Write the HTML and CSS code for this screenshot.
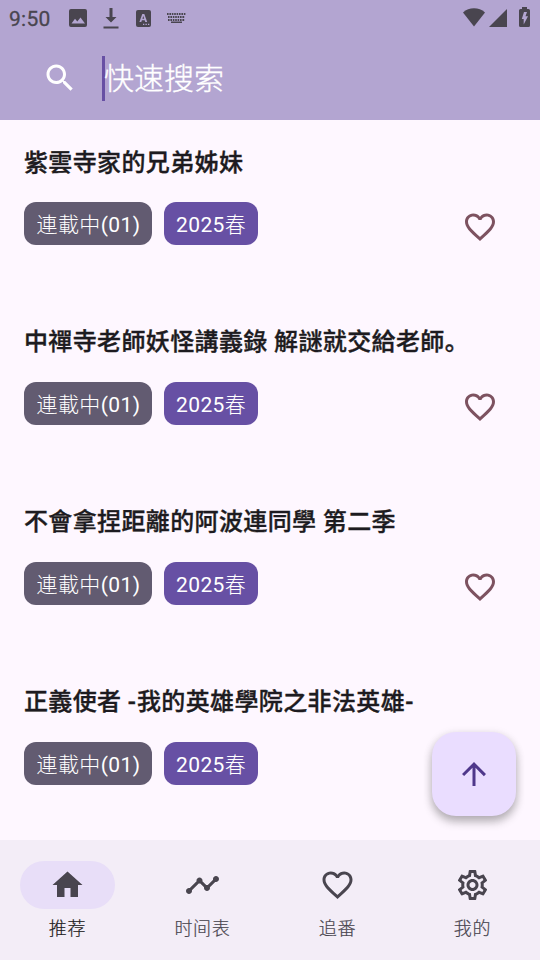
FILE: index.html
```html
<!DOCTYPE html>
<html lang="zh-CN">
<head>
<meta charset="utf-8">
<title>快速搜索</title>
<link rel="stylesheet" href="styles.css">
</head>
<body>
<svg class="defs" width="0" height="0">
  <symbol id="heart" viewBox="0 0 24 24"><path d="M16.5 3c-1.74 0-3.41.81-4.5 2.09C10.91 3.81 9.24 3 7.5 3 4.42 3 2 5.42 2 8.5c0 3.78 3.4 6.86 8.55 11.54L12 21.35l1.45-1.32C18.6 15.36 22 12.28 22 8.5 22 5.42 19.58 3 16.5 3zm-4.4 15.55-.1.1-.1-.1C7.14 14.24 4 11.39 4 8.5 4 6.5 5.5 5 7.5 5c1.54 0 3.04.99 3.57 2.36h1.87C13.46 5.99 14.96 5 16.5 5c2 0 3.5 1.5 3.5 3.5 0 2.89-3.14 5.74-7.9 10.05z"/></symbol>
</svg>
<div class="screen">
  <header class="top">
    <div class="status">
      <span class="time">9:50</span>
      <svg class="s-image" viewBox="0 0 18 18"><path fill-rule="evenodd" d="M2 0h14a2 2 0 0 1 2 2v14a2 2 0 0 1-2 2H2a2 2 0 0 1-2-2V2a2 2 0 0 1 2-2zM2.500 14.500h13.500L11.500 8.500 8.300 12.500 6 9.700z"/></svg>
      <svg class="s-down" viewBox="0 0 16 21"><path d="M6.500 0h3v9h4L8 14.500 2.500 9h4zM.5 18.500h15v2H.5z"/></svg>
      <svg class="s-letter" viewBox="0 0 15 17"><rect width="15" height="17" rx="2"/><path class="cut" d="M3.400 12 6.300 4h2l2.900 8H9.300l-.6-1.800H5.900L5.300 12zM6.400 8.700h1.800l-.9-2.700zM7 13.700h1.300V15H7zm2.500 0h1.300V15H9.500zm2.500 0h1.300V15H12z"/></svg>
      <svg class="s-keys" viewBox="0 0 19 11"><path class="dash" d="M0 1h19M1 4h17M1 7h17"/><path d="M4 8.500h11v1.500H4z"/></svg>
      <span class="space"></span>
      <svg class="s-wifi" viewBox="0 0 22 19"><path d="M11 18.500 0 4.600C3 1.600 7 .3 11 .3s8 1.300 11 4.300z"/></svg>
      <svg class="s-cell" viewBox="0 0 18 18"><path d="M18 0v18H0z"/></svg>
      <svg class="s-battery" viewBox="0 0 11 20"><path d="M3 0h5v2h1.500A1.500 1.500 0 0 1 11 3.500v15A1.500 1.500 0 0 1 9.500 20h-8A1.500 1.500 0 0 1 0 18.500v-15A1.500 1.500 0 0 1 1.500 2H3z"/><path class="cut" d="M5 5h3L6.500 9.300H9L4.700 17.500V12H2.800z"/></svg>
    </div>
    <div class="search">
      <svg class="icon" viewBox="0 0 24 24"><path d="M15.500 14h-.79l-.28-.27C15.410 12.590 16 11.110 16 9.500 16 5.910 13.090 3 9.500 3S3 5.910 3 9.500 5.910 16 9.500 16c1.610 0 3.090-.59 4.230-1.570l.27.28v.79l5 4.990L20.490 19l-4.990-5zm-6 0C7.010 14 5 11.990 5 9.500S7.010 5 9.500 5 14 7.010 14 9.500 11.990 14 9.500 14z"/></svg>
      <span class="field">快速搜索</span>
    </div>
  </header>
  <main class="list">
    <article class="item">
      <h2>紫雲寺家的兄弟姊妹</h2>
      <div class="row"><span class="chip">連載中<span class="latin">(01)</span></span><span class="chip season"><span class="latin">2025</span>春</span><svg class="icon fav"><use href="#heart"/></svg></div>
    </article>
    <article class="item">
      <h2>中禪寺老師妖怪講義錄 解謎就交給老師。</h2>
      <div class="row"><span class="chip">連載中<span class="latin">(01)</span></span><span class="chip season"><span class="latin">2025</span>春</span><svg class="icon fav"><use href="#heart"/></svg></div>
    </article>
    <article class="item">
      <h2>不會拿捏距離的阿波連同學 第二季</h2>
      <div class="row"><span class="chip">連載中<span class="latin">(01)</span></span><span class="chip season"><span class="latin">2025</span>春</span><svg class="icon fav"><use href="#heart"/></svg></div>
    </article>
    <article class="item">
      <h2>正義使者 <span class="hyphen">-</span>我的英雄學院之非法英雄<span class="hyphen">-</span></h2>
      <div class="row"><span class="chip">連載中<span class="latin">(01)</span></span><span class="chip season"><span class="latin">2025</span>春</span></div>
    </article>
  </main>
  <button class="fab" aria-label="Top"><svg class="icon" viewBox="0 0 24 24"><path d="m4 12 1.410 1.410L11 7.830V20h2V7.830l5.580 5.590L20 12l-8-8-8 8z"/></svg></button>
  <nav class="nav">
    <a class="tab active"><span class="pill"><svg class="icon" viewBox="0 0 24 24"><path d="M10 20v-6h4v6h5v-8h3L12 3 2 12h3v8z"/></svg></span>推荐</a>
    <a class="tab"><span class="pill"><svg class="icon" viewBox="0 0 24 24"><path d="M23 8c0 1.100-.9 2-2 2-.18 0-.35-.02-.51-.07l-3.560 3.550c.05.16.07.34.07.52 0 1.100-.9 2-2 2s-2-.9-2-2c0-.18.02-.36.07-.52l-2.550-2.550c-.16.05-.34.07-.52.07s-.36-.02-.52-.07l-4.550 4.560c.05.16.07.33.07.51 0 1.100-.9 2-2 2s-2-.9-2-2 .9-2 2-2c.18 0 .35.02.51.07l4.560-4.550C8.020 9.360 8 9.180 8 9c0-1.100.9-2 2-2s2 .9 2 2c0 .18-.02.36-.07.52l2.550 2.550c.16-.05.34-.07.52-.07s.36.02.52.07l3.550-3.560C19.020 8.350 19 8.180 19 8c0-1.100.9-2 2-2s2 .9 2 2z"/></svg></span>时间表</a>
    <a class="tab"><span class="pill"><svg class="icon"><use href="#heart"/></svg></span>追番</a>
    <a class="tab"><span class="pill"><svg class="icon" viewBox="0 0 24 24"><path d="M19.430 12.980c.04-.32.07-.64.07-.98s-.03-.66-.07-.98l2.110-1.650c.19-.15.24-.42.12-.64l-2-3.460c-.09-.16-.26-.25-.44-.25-.06 0-.12.010-.17.030l-2.490 1c-.52-.4-1.080-.73-1.690-.98l-.38-2.650C14.460 2.180 14.250 2 14 2h-4c-.25 0-.46.18-.49.42l-.38 2.650c-.61.25-1.170.59-1.690.98l-2.490-1c-.06-.02-.12-.03-.18-.03-.17 0-.34.09-.43.25l-2 3.460c-.13.22-.07.49.12.64l2.110 1.650c-.04.32-.07.65-.07.98s.03.66.07.98l-2.110 1.650c-.19.15-.24.42-.12.64l2 3.460c.09.16.26.25.44.25.06 0 .12-.01.17-.03l2.490-1c.52.4 1.080.73 1.690.98l.38 2.650c.03.24.24.42.49.42h4c.25 0 .46-.18.49-.42l.38-2.650c.61-.25 1.170-.59 1.690-.98l2.490 1c.06.02.12.03.18.03.17 0 .34-.09.43-.25l2-3.460c.12-.22.07-.49-.12-.64l-2.110-1.650zm-1.980-1.710c.04.31.05.52.05.73s-.02.43-.05.73l-.14 1.130.89.7 1.080.84-.7 1.210-1.270-.51-1.040-.42-.9.68c-.43.32-.84.56-1.250.73l-1.060.43-.16 1.130-.2 1.350h-1.400l-.19-1.350-.16-1.130-1.060-.43c-.43-.18-.83-.41-1.230-.71l-.91-.7-1.060.43-1.270.51-.7-1.210 1.080-.84.89-.7-.14-1.130c-.03-.31-.05-.54-.05-.74s.02-.43.05-.73l.14-1.130-.89-.7-1.080-.84.7-1.210 1.270.51 1.040.42.9-.68c.43-.32.84-.56 1.250-.73l1.060-.43.16-1.130.2-1.350h1.390l.19 1.350.16 1.130 1.060.43c.43.18.83.41 1.230.71l.91.7 1.060-.43 1.270-.51.7 1.210-1.070.85-.89.7.14 1.130zM12 8c-2.210 0-4 1.790-4 4s1.790 4 4 4 4-1.790 4-4-1.790-4-4-4zm0 6c-1.100 0-2-.9-2-2s.9-2 2-2 2 .9 2 2-.9 2-2 2z"/></svg></span>我的</a>
  </nav>
</div>
</body>
</html>
```
FILE: styles.css
```css
* { box-sizing: border-box; }
body { margin: 0; font-family: Roboto, "Noto Sans CJK SC", sans-serif; }
svg { display: block; flex: none; fill: currentColor; }
.defs { position: absolute; }
.icon { width: 36px; height: 36px; }
.screen { width: 540px; height: 960px; display: flex; flex-direction: column; position: relative; overflow: hidden; background: #fef7ff; }
.top { flex: none; height: 120px; background: #b3a5d1; }
.status { height: 36px; display: flex; align-items: flex-start; color: #49454f; padding-left: 9px; padding-right: 10px; }
.time { width: 60.4px; font-size: 21px; line-height: 24px; margin-top: 7px; letter-spacing: .3px; -webkit-text-stroke: .3px; }
.s-image { width: 18px; height: 18px; margin-top: 9.4px; }
.s-down { width: 16px; height: 21px; margin: 8px 0 0 16px; }
.s-letter { width: 15px; height: 17px; margin: 10px 0 0 17px; }
.s-keys { width: 19px; height: 11px; margin: 13px 0 0 16px; }
.dash { fill: none; stroke: currentColor; stroke-width: 1.8; stroke-dasharray: 1.6 .8; }
.cut { fill: #b3a5d1; }
.space { flex: 1; }
.s-wifi { width: 22px; height: 19px; margin-top: 8px; }
.s-cell { width: 18px; height: 18px; margin: 9px 0 0 4px; }
.s-battery { width: 11px; height: 20px; margin: 7px 0 0 12px; }
.search { height: 84px; display: flex; align-items: center; padding-left: 42px; color: #fff; }
.field { margin-left: 24px; height: 45px; border-left: 3px solid #6750a4; font-size: 30px; line-height: 45px; font-weight: 300; text-indent: -1px; -webkit-text-stroke: .35px; }
.list { flex: 1; min-height: 0; overflow: hidden; }
.item { height: 180px; padding: 24px 42px 0 24px; }
h2 { margin: 0; height: 36px; font-size: 24px; line-height: 36px; font-weight: 500; letter-spacing: .375px; color: #1d1b20; white-space: nowrap; -webkit-text-stroke: .35px; }
.hyphen { letter-spacing: 1px; }
.item:first-child h2 { line-height: 38px; }
.row { display: flex; margin-top: 22px; gap: 12px; }
.chip { width: 128px; height: 43px; border-radius: 12px; padding-left: 12.5px; font-size: 21px; line-height: 46px; letter-spacing: .4px; font-weight: 300; color: #fff; background: #625b71; white-space: nowrap; }
.latin { font-weight: 400; }
.season { width: 94px; padding-left: 12px; background: #6750a4; }
.fav { margin: 7px 0 0 auto; color: #7d5260; }
.fab { position: absolute; left: 432px; top: 732px; width: 84px; height: 84px; border: 0; padding: 0; border-radius: 24px; background: #eaddff; color: #4f378b; display: grid; place-items: center; box-shadow: 0 6px 10px rgba(0,0,0,.24), 0 2px 10px rgba(0,0,0,.12); }
.nav { flex: none; height: 120px; display: flex; background: #f3edf7; color: #49454f; }
.tab { flex: 1; display: flex; flex-direction: column; align-items: center; padding-top: 21px; font-size: 18px; line-height: 27px; letter-spacing: .75px; font-weight: 300; -webkit-text-stroke: .2px; }
.pill { width: 95px; height: 48px; border-radius: 24px; display: grid; place-items: center; margin-bottom: 6px; }
.pill .icon { transform: translateX(-.5px); }
.active { color: #1d1b20; }
.active .pill { background: #e8def8; color: #49454f; }
```
